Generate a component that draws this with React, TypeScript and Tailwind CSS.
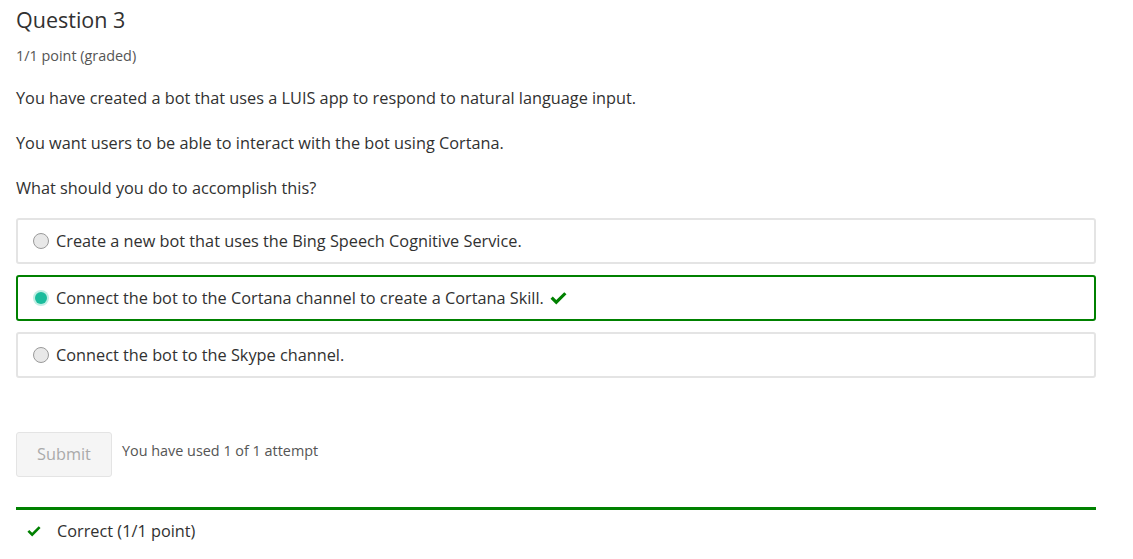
import { useState } from "react";

const options = [
  "Create a new bot that uses the Bing Speech Cognitive Service.",
  "Connect the bot to the Cortana channel to create a Cortana Skill.",
  "Connect the bot to the Skype channel.",
];

function Check({ className }: { className?: string }) {
  return (
    <svg viewBox="0 0 16 12" className={className} fill="#008100">
      <path d="M0.5 6.3 L2.6 4.2 L5.9 7.5 L13.4 0 L15.5 2.1 L5.9 11.7 Z" />
    </svg>
  );
}

function Radio({ checked }: { checked: boolean }) {
  return checked ? (
    <span className="w-[16px] h-[16px] rounded-full bg-[#bfeee3] flex items-center justify-center shrink-0">
      <span className="w-[12px] h-[12px] rounded-full bg-[#1abc9c]" />
    </span>
  ) : (
    <span className="w-[16px] h-[16px] rounded-full border border-[#9a9a9a] bg-[#e8e8e8] shrink-0" />
  );
}

export default function App() {
  const [selected] = useState(1);
  return (
    <div className="px-4 pt-[5px] text-[#313131] bg-white min-h-[559px]" style={{ fontFamily: "'Open Sans', sans-serif" }}>
      <h3 className="text-[21.5px] leading-[30px] text-[#313131]">Question 3</h3>
      <div className="text-[14.4px] leading-[20px] text-[#555] mt-[11px]">1/1 point (graded)</div>

      <p className="text-[16.3px] leading-[22px] mt-[21px]">
        You have created a bot that uses a LUIS app to respond to natural language input.
      </p>
      <p className="text-[16.3px] leading-[22px] mt-[23px]">
        You want users to be able to interact with the bot using Cortana.
      </p>
      <p className="text-[16.3px] leading-[22px] mt-[23px]">What should you do to accomplish this?</p>

      <div className="w-[1080px] mt-[19px] flex flex-col gap-[11px]">
        {options.map((o, i) => (
          <div
            key={o}
            className={
              i === selected
                ? "h-[46px] flex items-center gap-[7px] pl-[15px] rounded-[3px] border-2 border-[#008100]"
                : "h-[46px] flex items-center gap-[7px] pl-[15px] rounded-[3px] border-2 border-[#e4e4e4]"
            }
          >
            <Radio checked={i === selected} />
            <span className="text-[16.3px] leading-[22px]">{o}</span>
            {i === selected && <Check className="w-[17px] h-[13px] ml-[-1px]" />}
          </div>
        ))}
      </div>

      <div className="flex items-start gap-[10px] mt-[54px]">
        <button
          type="button"
          disabled
          className="w-[96px] h-[45px] rounded-[3px] border border-[#e4e4e4] bg-[#f5f5f5] text-[#aaa] text-[16.3px]"
        >
          Submit
        </button>
        <span className="text-[14.4px] leading-[20px] text-[#555] mt-[9px]">You have used 1 of 1 attempt</span>
      </div>

      <div className="w-[1080px] mt-[30px] border-t-[3px] border-[#008100] flex items-center gap-[16px] pl-[11px] pt-[10px]">
        <Check className="w-[14px] h-[11px]" />
        <span className="text-[16.3px] leading-[22px]">Correct (1/1 point)</span>
      </div>
    </div>
  );
}
